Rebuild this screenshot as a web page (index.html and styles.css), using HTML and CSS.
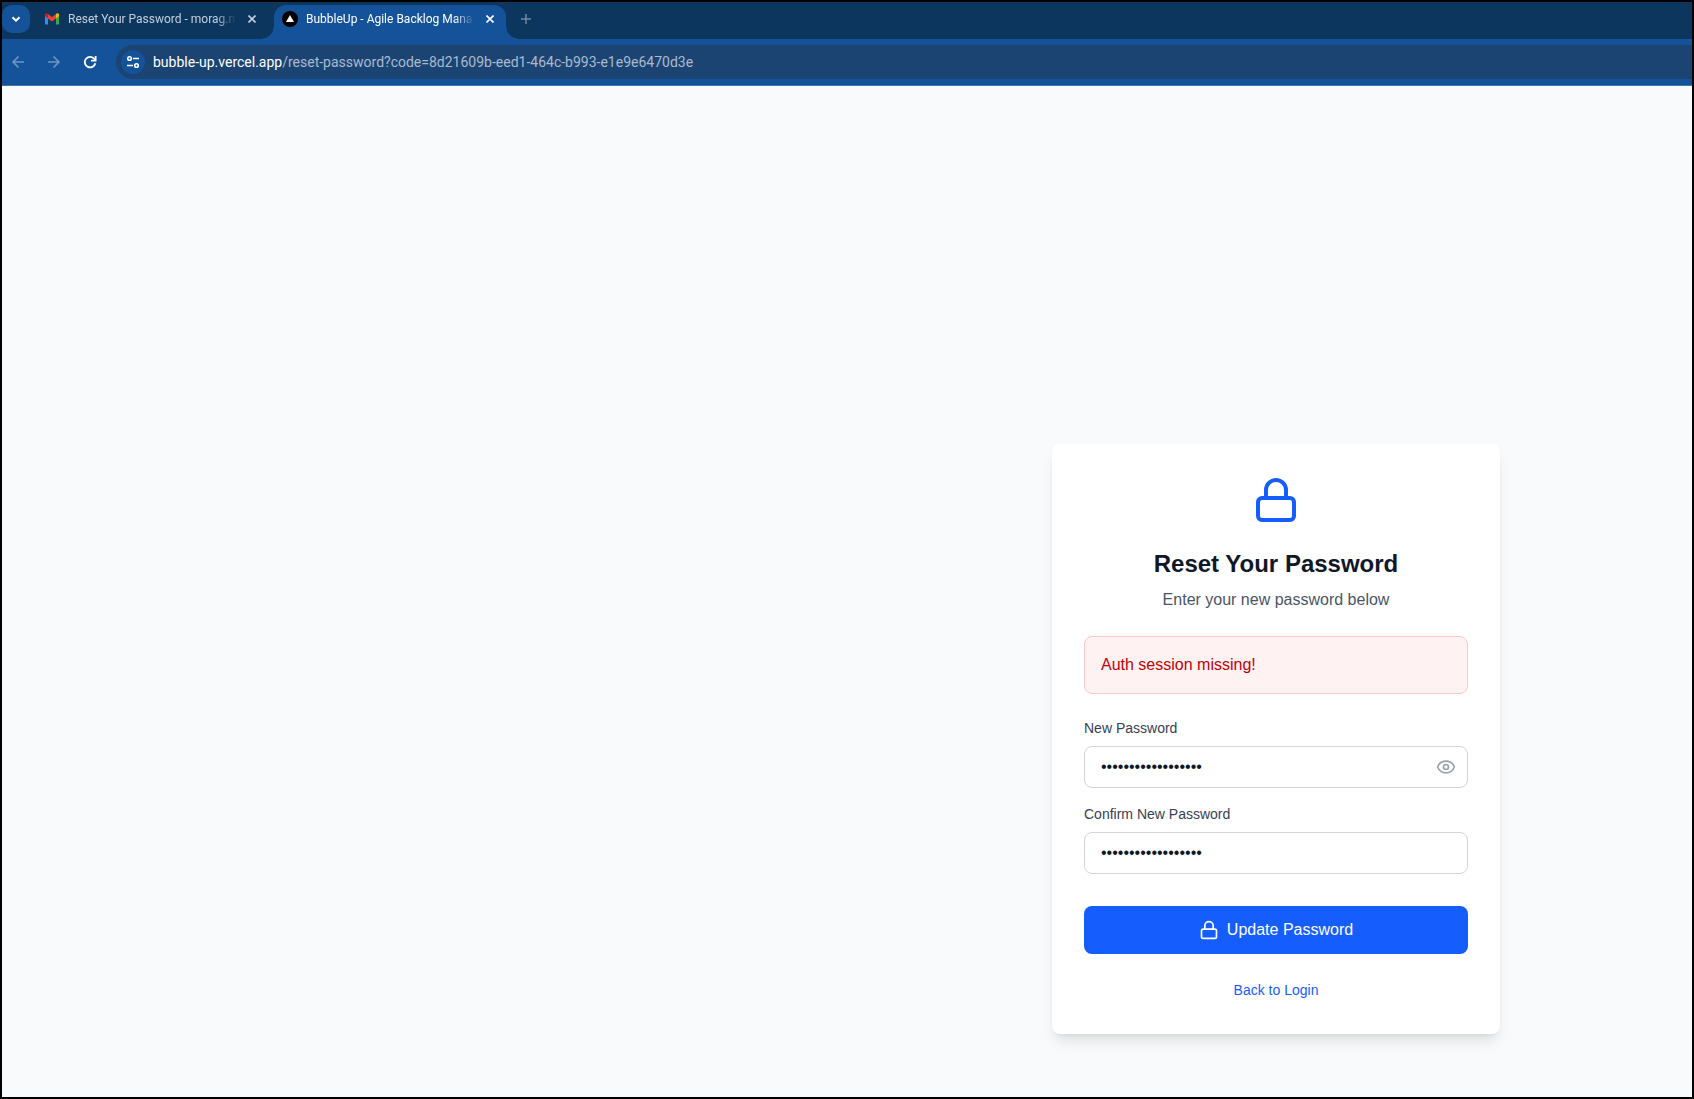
FILE: index.html
```html
<!DOCTYPE html>
<html lang="en">
<head>
<meta charset="utf-8">
<title>BubbleUp - Agile Backlog Mana</title>
<link rel="stylesheet" href="styles.css">
</head>
<body>
<div class="window">
  <header class="chrome">
    <div class="tab-strip">
      <button class="tab-search" type="button" aria-label="Search tabs">
        <svg width="10" height="10" viewBox="0 0 10 10" fill="none" stroke="currentColor" stroke-width="2"><path d="M1.5 3.2 5 6.7 8.500 3.200"/></svg>
      </button>
      <div class="tab">
        <svg class="favicon" viewBox="0 0 16 16"><path fill="#4285f4" d="M1 4v8.500c0 .6.400 1 1 1h2V6.500z"/><path fill="#34a853" d="M12 6.500v7h2c.6 0 1-.4 1-1V4z"/><path fill="#fbbc04" d="M12 3v4.500l3-2.300V4c0-1.600-1.700-2.200-3-1z"/><path fill="#c5221f" d="M1 4v1.200l3 2.300V3C2.700 1.800 1 2.400 1 4z"/><path fill="#ea4335" d="M4 7.500V3l4 3 4-3v4.500l-4 3z"/></svg>
        <span class="tab-title">Reset Your Password - morag.m</span>
        <button class="tab-close" type="button" aria-label="Close tab">
          <svg width="8" height="8" viewBox="0 0 8 8" stroke="currentColor" stroke-width="1.600"><path d="m.5.5 7 7m0-7-7 7"/></svg>
        </button>
      </div>
      <div class="tab tab-active">
        <svg class="favicon" viewBox="0 0 16 16"><circle cx="8" cy="8" r="8"/><path fill="#fff" d="m8 4 4 7H4z"/></svg>
        <span class="tab-title">BubbleUp - Agile Backlog Mana</span>
        <button class="tab-close" type="button" aria-label="Close tab">
          <svg width="8" height="8" viewBox="0 0 8 8" stroke="currentColor" stroke-width="1.600"><path d="m.5.5 7 7m0-7-7 7"/></svg>
        </button>
      </div>
      <button class="new-tab" type="button" aria-label="New tab">
        <svg width="10" height="10" viewBox="0 0 10 10" stroke="currentColor" stroke-width="1.500"><path d="M5 0v10M0 5h10"/></svg>
      </button>
    </div>
    <div class="toolbar">
      <nav class="nav-buttons">
        <button class="nav-button nav-dim" type="button" aria-label="Back">
          <svg width="14" height="14" viewBox="0 0 14 14" fill="none" stroke="currentColor" stroke-width="1.600"><path d="M13 7H2m5.500-5.500L2 7l5.500 5.500"/></svg>
        </button>
        <button class="nav-button nav-dim" type="button" aria-label="Forward">
          <svg width="14" height="14" viewBox="0 0 14 14" fill="none" stroke="currentColor" stroke-width="1.600"><path d="M1 7h11M6.500 1.500 12 7l-5.500 5.500"/></svg>
        </button>
        <button class="nav-button" type="button" aria-label="Reload">
          <svg width="14" height="14" viewBox="0 0 14 14" fill="none" stroke="currentColor" stroke-width="1.800"><path d="M12.300 8.200A5.300 5.300 0 1 1 11.400 4L12.500 5.200"/><path d="M12.600 1v4.600H8"/></svg>
        </button>
      </nav>
      <div class="omnibox">
        <button class="site-info" type="button" aria-label="View site information">
          <svg width="14" height="14" viewBox="0 0 14 14" fill="none" stroke="currentColor" stroke-width="1.600"><circle cx="3.500" cy="3.500" r="1.800"/><path d="M7 3.500h6M1 10.500h6"/><circle cx="10.500" cy="10.500" r="1.800"/></svg>
        </button>
        <div class="url" role="textbox" aria-label="Address"><span class="url-host">bubble-up.vercel.app</span>/reset-password?code=8d21609b-eed1-464c-b993-e1e9e6470d3e</div>
      </div>
    </div>
  </header>
  <main class="page">
    <form class="card">
      <svg class="card-icon" viewBox="0 0 24 24" fill="none" stroke="currentColor" stroke-width="2" stroke-linecap="round" stroke-linejoin="round"><rect x="3" y="11" width="18" height="11" rx="2"/><path d="M7 11V7a5 5 0 0 1 10 0v4"/></svg>
      <h1 class="card-title">Reset Your Password</h1>
      <p class="card-subtitle">Enter your new password below</p>
      <div class="alert" role="alert">Auth session missing!</div>
      <div class="fields">
        <div class="field">
          <label class="field-label" for="new-password">New Password</label>
          <div class="field-box">
            <input class="field-input" id="new-password" type="password" value="abcdefghijklmnopqr">
            <button class="reveal" type="button" aria-label="Show password">
              <svg width="20" height="20" viewBox="0 0 24 24" fill="none" stroke="currentColor" stroke-width="2" stroke-linecap="round" stroke-linejoin="round"><path d="M2.062 12.348a1 1 0 0 1 0-.696 10.750 10.750 0 0 1 19.876 0 1 1 0 0 1 0 .696 10.750 10.750 0 0 1-19.876 0"/><circle cx="12" cy="12" r="3"/></svg>
            </button>
          </div>
        </div>
        <div class="field">
          <label class="field-label" for="confirm-password">Confirm New Password</label>
          <div class="field-box">
            <input class="field-input" id="confirm-password" type="password" value="abcdefghijklmnopqr">
          </div>
        </div>
      </div>
      <button class="submit" type="submit">
        <svg width="20" height="20" viewBox="0 0 24 24" fill="none" stroke="currentColor" stroke-width="2" stroke-linecap="round" stroke-linejoin="round"><rect x="3" y="11" width="18" height="11" rx="2"/><path d="M7 11V7a5 5 0 0 1 10 0v4"/></svg>
        Update Password
      </button>
      <a class="back-link" href="#login">Back to Login</a>
    </form>
  </main>
</div>
</body>
</html>
```

FILE: styles.css
```css
* {
  box-sizing: border-box;
}

body {
  margin: 0;
  font-family: "Liberation Sans", Arial, sans-serif;
  font-size: 16px;
  line-height: 24px;
}

button {
  display: flex;
  align-items: center;
  justify-content: center;
  padding: 0;
  border: 0;
  background: none;
  color: inherit;
  font: inherit;
}

svg {
  flex: none;
}

.window {
  display: flex;
  flex-direction: column;
  min-height: 100vh;
  border: 2px solid #000;
}

/* Browser frame */
.chrome {
  font-family: "Segoe UI", Roboto, sans-serif;
  background: #14529a;
  color: #fff;
}

.tab-strip {
  display: flex;
  height: 37px;
  padding-top: 3px;
  background: #0d365f;
}

.tab-search {
  width: 28px;
  height: 28px;
  border-radius: 10px;
  background: #14529a;
}

.tab {
  display: flex;
  align-items: center;
  width: 232px;
  height: 34px;
  padding: 0 8px 6px;
  margin-left: 6px;
  color: #c3cfdc;
  font-size: 12px;
}

.tab-active {
  position: relative;
  border-radius: 12px 12px 0 0;
  background: #14529a;
  color: #fff;
}

.tab-active::before,
.tab-active::after {
  content: "";
  position: absolute;
  bottom: 0;
  width: 12px;
  height: 12px;
}

.tab-active::before {
  right: 100%;
  background: radial-gradient(circle at 0 0, #0d365f 11px, #14529a 12px);
}

.tab-active::after {
  left: 100%;
  background: radial-gradient(circle at 100% 0, #0d365f 11px, #14529a 12px);
}

.favicon {
  width: 16px;
  height: 16px;
}

.tab-title {
  flex: 1;
  min-width: 0;
  margin-left: 8px;
  overflow: hidden;
  white-space: nowrap;
  -webkit-mask-image: linear-gradient(to left, transparent, #000 20px);
  mask-image: linear-gradient(to left, transparent, #000 20px);
}

.tab-close {
  width: 16px;
  height: 16px;
  margin-left: 8px;
}

.new-tab {
  width: 28px;
  height: 28px;
  margin-left: 6px;
  color: #6d87a1;
}

.toolbar {
  display: flex;
  align-items: center;
  height: 47px;
  border-bottom: 1px solid #4275ae;
}

.nav-buttons {
  display: flex;
  gap: 8px;
  padding: 0 12px 0 2px;
}

.nav-button {
  width: 28px;
  height: 28px;
}

.nav-dim {
  color: #6f97c3;
}

.omnibox {
  display: flex;
  flex: 1;
  align-items: center;
  gap: 8px;
  height: 34px;
  padding-left: 5px;
  border-radius: 17px 0 0 17px;
  background: #1b4473;
}

.site-info {
  width: 24px;
  height: 24px;
  border-radius: 12px;
  background: #14529a;
}

.url {
  color: #a9bbcf;
  font-size: 14px;
  white-space: nowrap;
}

.url-host {
  color: #fff;
}

/* Reset password page */
.page {
  display: flex;
  flex: 1;
  align-items: flex-end;
  justify-content: flex-end;
  padding: 64px 192px 63px 16px;
  background: #f9fafb;
}

.card {
  display: flex;
  flex-direction: column;
  width: 100%;
  max-width: 448px;
  padding: 32px;
  border-radius: 8px;
  background: #fff;
  box-shadow: 0 10px 15px -3px rgba(0, 0, 0, 0.1), 0 4px 6px -4px rgba(0, 0, 0, 0.1);
}

.card-icon {
  align-self: center;
  width: 48px;
  height: 48px;
  color: #155dfc;
}

.card-title {
  margin: 24px 0 8px;
  color: #101828;
  font-size: 24px;
  line-height: 32px;
  text-align: center;
}

.card-subtitle {
  margin: 0;
  color: #4a5565;
  text-align: center;
}

.alert {
  margin: 24px 0;
  padding: 16px;
  border: 1px solid #ffc9c9;
  border-radius: 8px;
  background: #fef2f2;
  color: #c10007;
}

.fields {
  display: flex;
  flex-direction: column;
  gap: 16px;
}

.field {
  display: flex;
  flex-direction: column;
  gap: 8px;
}

.field-label {
  color: #364153;
  font-size: 14px;
  line-height: 20px;
}

.field-box {
  display: flex;
  align-items: center;
  height: 42px;
  border: 1px solid #d1d5dc;
  border-radius: 8px;
}

.field-input {
  flex: 1;
  min-width: 0;
  height: 40px;
  padding: 0 16px;
  border: 0;
  outline: 0;
  background: none;
  color: #101828;
  font: inherit;
}

.reveal {
  width: 20px;
  height: 20px;
  margin-right: 11px;
  color: #99a1af;
}

.submit {
  gap: 8px;
  height: 48px;
  margin: 32px 0 24px;
  border-radius: 8px;
  background: #155dfc;
  color: #fff;
}

.back-link {
  align-self: center;
  color: #155dfc;
  font-size: 14px;
  text-decoration: none;
}
```
